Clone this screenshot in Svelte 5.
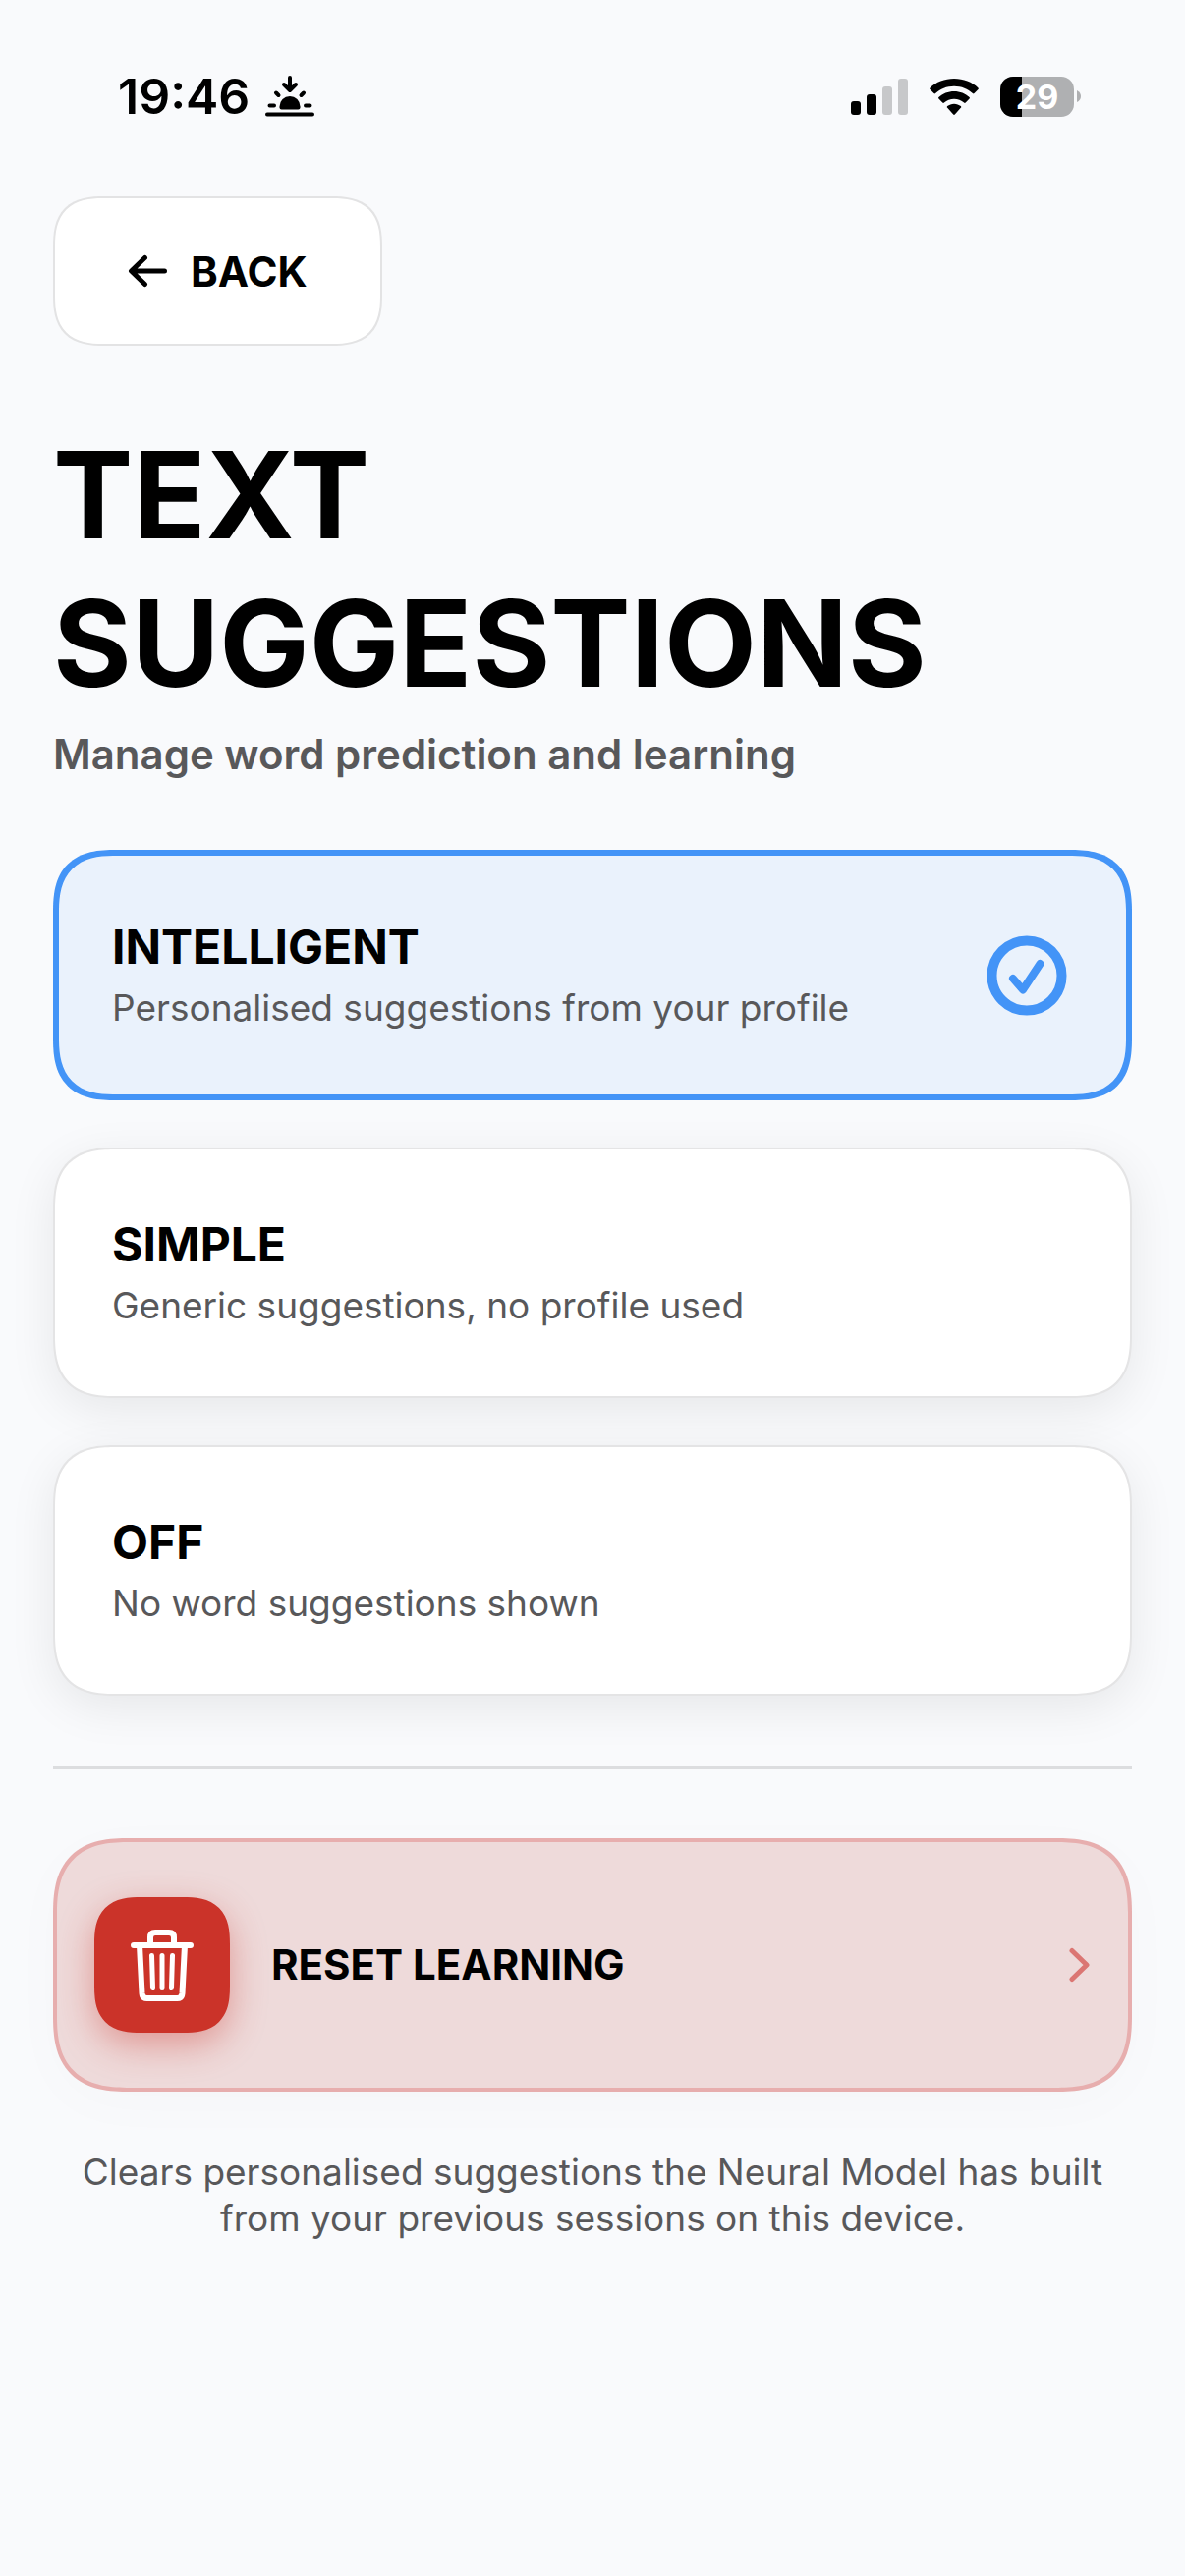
<script>
    const options = [
        { id: 'intelligent', title: 'INTELLIGENT', text: 'Personalised suggestions from your profile' },
        { id: 'simple', title: 'SIMPLE', text: 'Generic suggestions, no profile used' },
        { id: 'off', title: 'OFF', text: 'No word suggestions shown' }
    ];

    let selected = 'intelligent';
    const battery = 29;

    function choose(id) {
        selected = id;
    }

    function resetLearning() {
        selected = 'intelligent';
    }
</script>

<div class="screen">
    <div class="status-bar">
        <div class="status-left">
            <span class="time">19:46</span>
            <svg width="50" height="42" viewBox="0 0 50 42" fill="none" stroke="#000" stroke-width="4" stroke-linecap="round" stroke-linejoin="round">
                <path d="M25 2V14M19 9L25 15L31 9M11 17.500L13.500 20M39 17.500L36.500 20M4.500 30.500H9M41 30.500H45.500M2 39.500H48" />
                <path d="M14.500 32.500V31.500a10.500 10.500 0 0 1 21 0V32.500q0 2-2 2h-17q-2 0-2-2z" fill="#000" stroke="none" />
            </svg>
        </div>
        <div class="status-right">
            <svg width="58" height="37" viewBox="0 0 58 37">
                <rect x="0" y="23" width="10" height="14" rx="3" />
                <rect x="16" y="16" width="10" height="21" rx="3" />
                <rect x="32" y="8" width="10" height="29" rx="3" fill="#c7c8ca" />
                <rect x="48" y="0" width="10" height="37" rx="3" fill="#c7c8ca" />
            </svg>
            <svg width="50" height="37" viewBox="0 0 50 37">
                <path d="M25 0C15.500 0 6.500 3.500 0.500 9.500q-.7.800 0 1.600L4.500 15q.8.800 1.600 0C11 10.500 17.500 7.700 25 7.700S39 10.500 43.900 15q.8.800 1.600 0l4-3.900q.7-.8 0-1.600C43.500 3.500 34.500 0 25 0z" />
                <path d="M25 13c-6 0-11.500 2.300-15.600 6q-.8.800 0 1.600l3.900 3.900q.8.800 1.600 0c2.700-2.300 6.200-3.800 10.100-3.800s7.400 1.500 10.100 3.800q.8.800 1.600 0l3.900-3.900q.8-.8 0-1.600C36.500 15.300 31 13 25 13z" />
                <path d="M25 25.700c-2.600 0-5 .9-6.800 2.400q-.9.800 0 1.600l6 6.800q.8.800 1.600 0l6-6.800q.9-.8 0-1.600C30 26.600 27.600 25.700 25 25.700z" />
            </svg>
            <div class="battery">
                <div class="battery-body">
                    <div class="battery-level" style="width: {battery}%"></div>
                    <span class="battery-text">{battery}</span>
                </div>
                <svg width="4" height="12" viewBox="0 0 4 12"><path d="M0 0Q4 2 4 6T0 12z" fill="#afb0b2" /></svg>
            </div>
        </div>
    </div>

    <main>
        <button class="back">
            <svg width="40" height="34" viewBox="0 0 40 34" fill="none" stroke="#000" stroke-width="5" stroke-linecap="round" stroke-linejoin="round">
                <path d="M37.500 17H4M17.500 3.500L3.500 17L17.500 30.500" />
            </svg>
            BACK
        </button>

        <h1>TEXT<br />SUGGESTIONS</h1>
        <p class="subtitle">Manage word prediction and learning</p>

        <div class="options">
            {#each options as option}
                <button class="option" class:active={selected === option.id} aria-pressed={selected === option.id} on:click={() => choose(option.id)}>
                    <span class="option-text">
                        <span class="option-title">{option.title}</span>
                        <span class="option-desc">{option.text}</span>
                    </span>
                    {#if selected === option.id}
                        <svg width="82" height="82" viewBox="0 0 82 82" fill="none" stroke="#4394f7" stroke-linecap="round" stroke-linejoin="round">
                            <circle cx="41" cy="41" r="35.500" stroke-width="10" />
                            <path d="M27 44L37 55.500L54.500 29" stroke-width="8" />
                        </svg>
                    {/if}
                </button>
            {/each}
        </div>

        <hr />

        <button class="reset" on:click={resetLearning}>
            <span class="trash">
                <svg width="66" height="76" viewBox="0 0 66 76" fill="none" stroke="#fff" stroke-width="6" stroke-linecap="round" stroke-linejoin="round">
                    <path d="M4 18H62M21 18V10q0-5 5-5H40q5 0 5 5V18" />
                    <path d="M10 18L12.500 67q.4 5 5 5H48.500q4.600 0 5-5L56 18" />
                    <path d="M22.500 28.500L23.500 61.500M33 28.500V61.500M43.500 28.500L42.500 61.500" stroke-width="5" />
                </svg>
            </span>
            <span class="reset-label">RESET LEARNING</span>
            <svg width="22" height="36" viewBox="0 0 22 36" fill="none" stroke="#db7673" stroke-width="5" stroke-linecap="round" stroke-linejoin="round">
                <path d="M3 3.500L18 18L3 32.500" />
            </svg>
        </button>
        <p class="note">Clears personalised suggestions the Neural Model has built from your previous sessions on this device.</p>
    </main>
</div>

<style>
    :global(body) {
        background: #f9fafc;
    }

    .screen {
        min-height: 100vh;
        box-sizing: border-box;
        background: #f9fafc;
        color: #000;
        font-family: Inter, "Liberation Sans", sans-serif;
    }

    .status-bar {
        display: flex;
        justify-content: space-between;
        align-items: center;
        height: 200px;
        padding: 0 106px 4px 120px;
        box-sizing: border-box;
    }

    .status-left,
    .status-right {
        display: flex;
        align-items: center;
    }

    .status-left {
        gap: 16px;
    }

    .status-right {
        gap: 22px;
    }

    .time {
        font-size: 50px;
        line-height: 60px;
        font-weight: 600;
    }

    .battery {
        display: flex;
        align-items: center;
        gap: 3px;
    }

    .battery-body {
        position: relative;
        width: 75px;
        height: 41px;
        border-radius: 13px;
        background: #afb0b2;
    }

    .battery-level {
        height: 100%;
        border-radius: 13px 0 0 13px;
        background: #000;
    }

    .battery-text {
        position: absolute;
        inset: 0;
        text-align: center;
        color: #fff;
        font-size: 34px;
        line-height: 41px;
        font-weight: 700;
    }

    main {
        display: flex;
        flex-direction: column;
        align-items: stretch;
        padding: 0 54px 48px;
    }

    button {
        font-family: inherit;
        color: inherit;
        cursor: pointer;
        text-align: left;
        box-sizing: border-box;
    }

    .back {
        align-self: flex-start;
        display: flex;
        align-items: center;
        gap: 24px;
        height: 152px;
        padding: 0 74px;
        border: 2px solid #e3e3e4;
        border-radius: 42px;
        background: #fff;
        font-size: 42px;
        font-weight: 700;
    }

    h1 {
        margin: 76px 0 0;
        font-size: 122px;
        line-height: 151px;
        font-weight: 700;
    }

    .subtitle {
        margin: 13px 0 0;
        color: #58585a;
        font-size: 42px;
        line-height: 50px;
        font-weight: 600;
    }

    .options {
        display: flex;
        flex-direction: column;
        gap: 48px;
        margin-top: 72px;
    }

    .option {
        display: flex;
        align-items: center;
        justify-content: space-between;
        min-height: 255px;
        padding: 0 58px;
        border: 2px solid #e4e4e5;
        border-radius: 50px;
        background: #fff;
        box-shadow: 0 12px 48px rgba(0, 0, 0, 0.08);
    }

    .option.active {
        padding: 0 60px 0 54px;
        border: 6px solid #4394f7;
        background: #eaf2fc;
        box-shadow: none;
    }

    .option-text {
        display: flex;
        flex-direction: column;
        gap: 10px;
    }

    .option-title {
        font-size: 48px;
        line-height: 56px;
        font-weight: 700;
    }

    .option-desc {
        color: #58585a;
        font-size: 37px;
        line-height: 47px;
    }

    hr {
        width: 100%;
        height: 3px;
        margin: 72px 0 70px;
        border: none;
        background: #dcdddf;
    }

    .reset {
        display: flex;
        align-items: center;
        gap: 42px;
        min-height: 258px;
        padding: 0 38px;
        border: 4px solid #e7aeae;
        border-radius: 62px;
        background: #eedada;
        box-shadow: 0 12px 60px rgba(0, 0, 0, 0.02);
    }

    .trash {
        display: flex;
        align-items: center;
        justify-content: center;
        width: 138px;
        height: 138px;
        border-radius: 38px;
        background: #cb3329;
        box-shadow: 0 12px 36px rgba(203, 51, 41, 0.4);
    }

    .reset-label {
        flex: 1;
        font-size: 42px;
        line-height: 50px;
        font-weight: 700;
    }

    .note {
        margin: 58px 0 0;
        padding: 0 20px;
        color: #58585a;
        text-align: center;
        font-size: 37px;
        line-height: 47px;
    }

    /* smoother corners where the browser can draw them */
    @supports (corner-shape: superellipse(1.4)) {
        .back,
        .option,
        .reset,
        .trash {
            corner-shape: superellipse(1.4);
        }

        .back {
            border-radius: 52px;
        }

        .option {
            border-radius: 64px;
        }

        .reset {
            border-radius: 78px;
        }

        .trash {
            border-radius: 48px;
        }
    }
</style>
